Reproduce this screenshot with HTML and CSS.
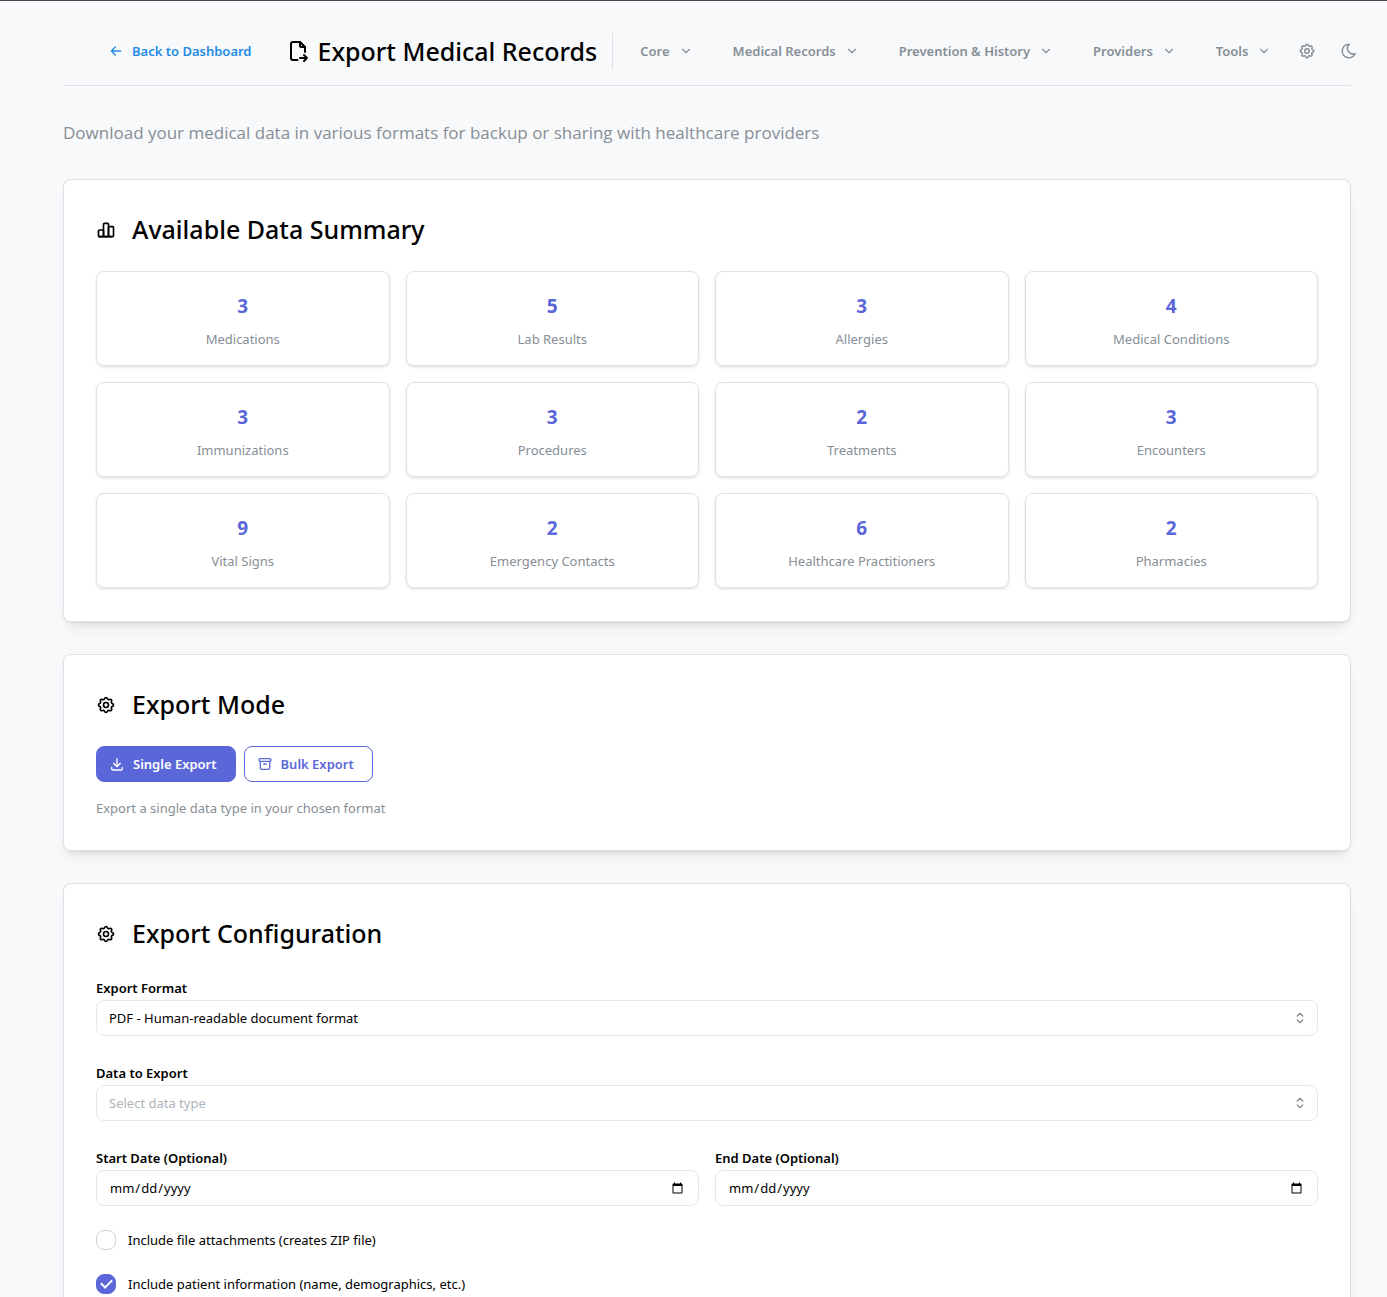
FILE: index.html
```html
<!DOCTYPE html>
<html lang="en">
<head>
<meta charset="utf-8">
<meta name="viewport" content="width=device-width, initial-scale=1">
<title>Export Medical Records</title>
<link rel="stylesheet" href="styles.css">
</head>
<body>
<svg class="sprite" aria-hidden="true">
  <symbol id="i-chevron" viewBox="0 0 24 24"><path d="M6 9l6 6l6 -6"/></symbol>
  <symbol id="i-gear" viewBox="0 0 24 24"><path d="M10.325 4.317c.426 -1.756 2.924 -1.756 3.35 0a1.724 1.724 0 0 0 2.573 1.066c1.543 -.94 3.31 .826 2.37 2.37a1.724 1.724 0 0 0 1.065 2.572c1.756 .426 1.756 2.924 0 3.35a1.724 1.724 0 0 0 -1.066 2.573c.94 1.543 -.826 3.31 -2.37 2.37a1.724 1.724 0 0 0 -2.572 1.065c-.426 1.756 -2.924 1.756 -3.35 0a1.724 1.724 0 0 0 -2.573 -1.066c-1.543 .94 -3.31 -.826 -2.37 -2.37a1.724 1.724 0 0 0 -1.065 -2.572c-1.756 -.426 -1.756 -2.924 0 -3.35a1.724 1.724 0 0 0 1.066 -2.573c-.94 -1.543 .826 -3.31 2.37 -2.37c1 .608 2.296 .07 2.572 -1.065"/><path d="M9 12a3 3 0 1 0 6 0a3 3 0 0 0 -6 0"/></symbol>
</svg>
<div class="page">
  <header class="header">
    <a class="back" href="#"><svg class="icon icon-md" viewBox="0 0 24 24"><path d="M5 12h14M5 12l6 6M5 12l6 -6"/></svg>Back to Dashboard</a>
    <h1 class="title"><svg class="icon icon-xl" viewBox="0 0 24 24"><path d="M14 3v4a1 1 0 0 0 1 1h4"/><path d="M11.500 21h-4.500a2 2 0 0 1 -2 -2v-14a2 2 0 0 1 2 -2h7l5 5v5m-5 6h7m-3 -3l3 3l-3 3"/></svg>Export Medical Records</h1>
    <nav class="nav">
      <button class="nav-item">Core<svg class="icon icon-sm"><use href="#i-chevron"/></svg></button>
      <button class="nav-item">Medical Records<svg class="icon icon-sm"><use href="#i-chevron"/></svg></button>
      <button class="nav-item">Prevention &amp; History<svg class="icon icon-sm"><use href="#i-chevron"/></svg></button>
      <button class="nav-item">Providers<svg class="icon icon-sm"><use href="#i-chevron"/></svg></button>
      <button class="nav-item">Tools<svg class="icon icon-sm"><use href="#i-chevron"/></svg></button>
    </nav>
    <div class="actions">
      <button class="icon-button" aria-label="Settings"><svg class="icon icon-lg"><use href="#i-gear"/></svg></button>
      <button class="icon-button" aria-label="Dark mode"><svg class="icon icon-lg" viewBox="0 0 24 24"><path d="M12 3c.132 0 .263 0 .393 0a7.500 7.500 0 0 0 7.920 12.446a9 9 0 1 1 -8.313 -12.454z"/></svg></button>
    </div>
  </header>
  <p class="lead">Download your medical data in various formats for backup or sharing with healthcare providers</p>
  <main class="sections">
    <section class="card">
      <h2 class="card-title"><svg class="icon icon-heading" viewBox="0 0 24 24"><path d="M3 13a1 1 0 0 1 1 -1h4a1 1 0 0 1 1 1v6a1 1 0 0 1 -1 1h-4a1 1 0 0 1 -1 -1z"/><path d="M15 9a1 1 0 0 1 1 -1h4a1 1 0 0 1 1 1v10a1 1 0 0 1 -1 1h-4a1 1 0 0 1 -1 -1z"/><path d="M9 5a1 1 0 0 1 1 -1h4a1 1 0 0 1 1 1v14a1 1 0 0 1 -1 1h-4a1 1 0 0 1 -1 -1z"/><path d="M4 20h14"/></svg>Available Data Summary</h2>
      <div class="stats">
        <div class="stat"><strong>3</strong><span>Medications</span></div>
        <div class="stat"><strong>5</strong><span>Lab Results</span></div>
        <div class="stat"><strong>3</strong><span>Allergies</span></div>
        <div class="stat"><strong>4</strong><span>Medical Conditions</span></div>
        <div class="stat"><strong>3</strong><span>Immunizations</span></div>
        <div class="stat"><strong>3</strong><span>Procedures</span></div>
        <div class="stat"><strong>2</strong><span>Treatments</span></div>
        <div class="stat"><strong>3</strong><span>Encounters</span></div>
        <div class="stat"><strong>9</strong><span>Vital Signs</span></div>
        <div class="stat"><strong>2</strong><span>Emergency Contacts</span></div>
        <div class="stat"><strong>6</strong><span>Healthcare Practitioners</span></div>
        <div class="stat"><strong>2</strong><span>Pharmacies</span></div>
      </div>
    </section>
    <section class="card">
      <h2 class="card-title"><svg class="icon icon-heading"><use href="#i-gear"/></svg>Export Mode</h2>
      <div class="modes">
        <button class="button button-filled"><svg class="icon icon-md" viewBox="0 0 24 24"><path d="M4 17v2a2 2 0 0 0 2 2h12a2 2 0 0 0 2 -2v-2M7 11l5 5l5 -5M12 4v12"/></svg>Single Export</button>
        <button class="button"><svg class="icon icon-md" viewBox="0 0 24 24"><path d="M3 6a2 2 0 0 1 2 -2h14a2 2 0 0 1 0 4h-14a2 2 0 0 1 -2 -2"/><path d="M5 8v10a2 2 0 0 0 2 2h10a2 2 0 0 0 2 -2v-10M10 12h4"/></svg>Bulk Export</button>
      </div>
      <p class="hint">Export a single data type in your chosen format</p>
    </section>
    <section class="card">
      <h2 class="card-title"><svg class="icon icon-heading"><use href="#i-gear"/></svg>Export Configuration</h2>
      <form class="form">
        <div class="field">
          <label for="format">Export Format</label>
          <div class="select"><select id="format" class="control"><option>PDF - Human-readable document format</option></select><svg class="icon select-icon" viewBox="0 0 24 24"><path d="M8 9l4 -4l4 4M16 15l-4 4l-4 -4"/></svg></div>
        </div>
        <div class="field">
          <label for="data">Data to Export</label>
          <div class="select"><select id="data" class="control placeholder"><option>Select data type</option></select><svg class="icon select-icon" viewBox="0 0 24 24"><path d="M8 9l4 -4l4 4M16 15l-4 4l-4 -4"/></svg></div>
        </div>
        <div class="dates">
          <div class="field"><label for="start">Start Date (Optional)</label><input id="start" class="control" type="date"></div>
          <div class="field"><label for="end">End Date (Optional)</label><input id="end" class="control" type="date"></div>
        </div>
        <label class="check"><input type="checkbox">Include file attachments (creates ZIP file)</label>
        <label class="check"><input type="checkbox" checked>Include patient information (name, demographics, etc.)</label>
      </form>
    </section>
  </main>
</div>
</body>
</html>
```
FILE: styles.css
```css
:root {
  --primary: #5b67d8;
  --muted: #868e96;
  --line: #dee2e6;
  --field-line: #e2e8f0;
}

* { box-sizing: border-box; }

body {
  margin: 0;
  border-top: 1px solid #46464c;
  background: #f8f9fb;
  color: #000;
  font: 13px/20px "Noto Sans", "Open Sans", sans-serif;
}

h1, h2, p { margin: 0; }

button, input, select { font: inherit; }

button { cursor: pointer; }

.sprite { position: absolute; width: 0; height: 0; }

.icon {
  flex: none;
  fill: none;
  stroke: currentColor;
  stroke-width: 2;
  stroke-linecap: round;
  stroke-linejoin: round;
}
.icon-sm { width: 14px; height: 14px; }
.icon-md { width: 16px; height: 16px; }
.icon-lg { width: 18px; height: 18px; }
.icon-heading { width: 20px; height: 20px; }
.icon-xl { width: 24px; height: 24px; }

.page { padding: 0 36px 32px 63px; }

.header {
  display: flex;
  align-items: center;
  padding: 32px 0 16px;
  border-bottom: 1px solid var(--line);
  white-space: nowrap;
}

.back {
  display: flex;
  align-items: center;
  gap: 8px;
  margin: 0 34px 0 45px;
  color: #228be6;
  font-weight: 600;
  text-decoration: none;
}

.title {
  display: flex;
  align-items: center;
  gap: 8px;
  font-size: 25px;
  line-height: 36px;
  font-weight: 500;
}

.nav {
  display: flex;
  align-items: center;
  gap: 40px;
  height: 36px;
  margin-left: 15px;
  padding-left: 27px;
  border-left: 1px solid var(--line);
}

.nav-item {
  display: flex;
  align-items: center;
  gap: 9px;
  padding: 0;
  border: 0;
  background: none;
  color: var(--muted);
  font-weight: 600;
}

.actions {
  display: flex;
  gap: 24px;
  margin: 0 -7px 0 auto;
}

.icon-button {
  display: flex;
  padding: 0;
  border: 0;
  background: none;
  color: var(--muted);
}

.lead {
  padding: 32px 0;
  color: var(--muted);
  font-family: "Open Sans", "Noto Sans", sans-serif;
  font-size: 17px;
  line-height: 29px;
}

.sections { display: grid; gap: 32px; }

.card {
  padding: 32px;
  border: 1px solid var(--line);
  border-radius: 8px;
  background: #fff;
  box-shadow: 0 1px 3px rgba(0, 0, 0, 0.05), 0 10px 15px -5px rgba(0, 0, 0, 0.07), 0 7px 7px -5px rgba(0, 0, 0, 0.06);
}

.card-title {
  display: flex;
  align-items: center;
  gap: 16px;
  margin-bottom: 24px;
  font-size: 25px;
  line-height: 35px;
  font-weight: 500;
}

.stats {
  display: grid;
  grid-template-columns: repeat(4, 1fr);
  gap: 16px;
  padding-bottom: 1px;
}

.stat {
  display: grid;
  gap: 10px;
  padding: 22px 16px 16px;
  border: 1px solid var(--line);
  border-radius: 8px;
  box-shadow: 0 1px 3px rgba(0, 0, 0, 0.08), 0 2px 3px rgba(0, 0, 0, 0.05);
  color: var(--muted);
  text-align: center;
}
.stat strong { color: var(--primary); font-size: 19px; line-height: 25px; }

.modes { display: flex; gap: 8px; margin-bottom: 16px; }

.button {
  display: flex;
  align-items: center;
  gap: 8px;
  height: 36px;
  padding: 0 18px 0 12px;
  border: 1px solid var(--primary);
  border-radius: 8px;
  background: #fff;
  color: var(--primary);
  font-weight: 600;
}
.button-filled { background: var(--primary); color: #fff; }

.hint { color: var(--muted); }

.form { display: grid; gap: 24px; }

.field label { display: block; padding-top: 2px; line-height: 23px; font-weight: 600; }

.control {
  display: block;
  width: 100%;
  height: 36px;
  padding: 0 12px;
  border: 1px solid var(--field-line);
  border-radius: 8px;
  background: #fff;
  color: #000;
  appearance: none;
}
.placeholder { color: #adb5bd; }

.select { position: relative; }

.select-icon {
  position: absolute;
  top: 10px;
  right: 10px;
  width: 16px;
  height: 16px;
  color: var(--muted);
  pointer-events: none;
}

.dates {
  display: grid;
  grid-template-columns: 1fr 1fr;
  gap: 16px;
}

.check { display: flex; align-items: center; gap: 12px; }

.check input {
  width: 20px;
  height: 20px;
  margin: 0;
  border: 1px solid #ced4da;
  border-radius: 8px;
  appearance: none;
}
.check input:checked {
  display: grid;
  place-content: center;
  border-color: var(--primary);
  background: var(--primary);
}
.check input:checked::before {
  content: "";
  box-sizing: border-box;
  width: 11px;
  height: 7px;
  margin-bottom: 3px;
  border: solid #fff;
  border-width: 0 0 2px 2px;
  transform: rotate(-45deg);
}
```
